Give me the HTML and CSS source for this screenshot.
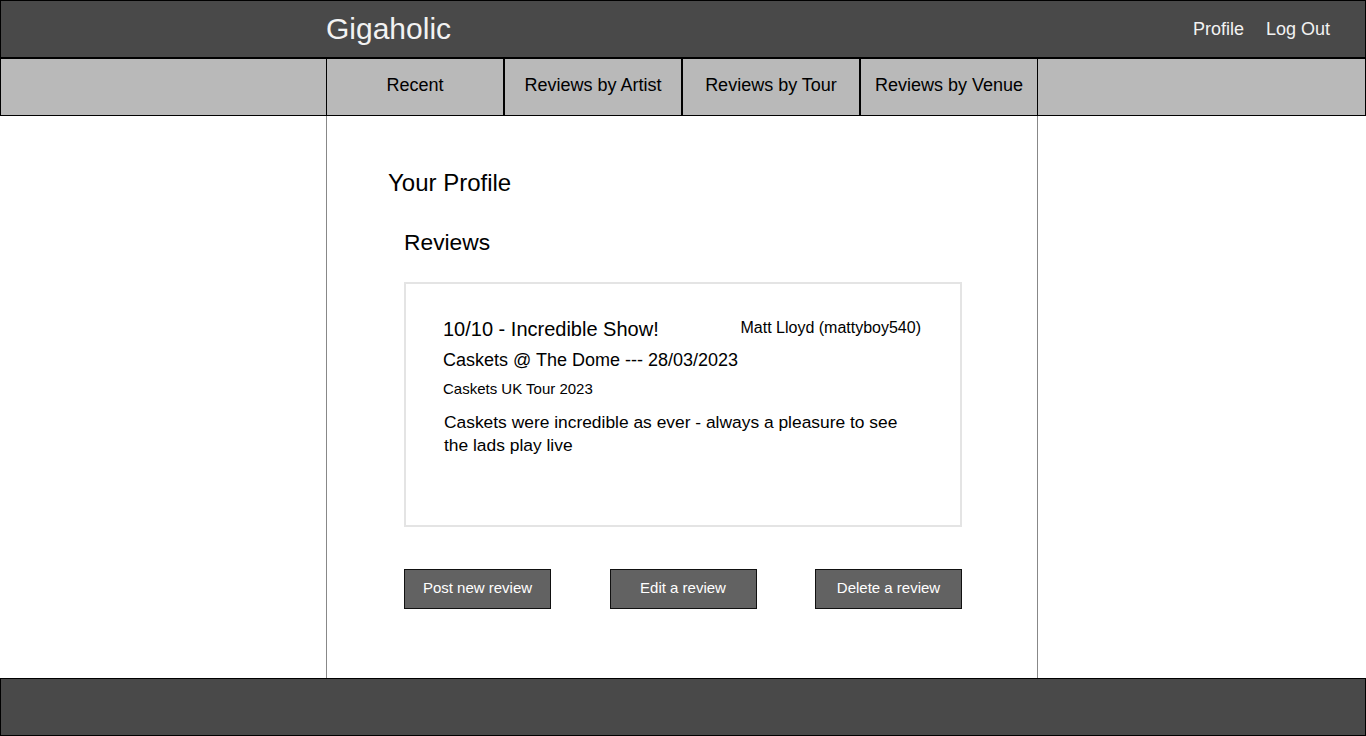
FILE: index.html
```html
<!DOCTYPE html>
<html lang="en">
<head>
<meta charset="utf-8">
<title>Gigaholic - Your Profile</title>
<link rel="stylesheet" href="styles.css">
</head>
<body>
<header class="topbar">
  <div class="brand">Gigaholic</div>
  <nav class="account">
    <a href="#" class="account-link">Profile</a>
    <a href="#" class="account-link">Log Out</a>
  </nav>
</header>
<nav class="tabs">
  <div class="tabs-row">
    <a href="#" class="tab">Recent</a>
    <a href="#" class="tab">Reviews by Artist</a>
    <a href="#" class="tab">Reviews by Tour</a>
    <a href="#" class="tab">Reviews by Venue</a>
  </div>
</nav>
<div class="page">
  <main class="column">
    <h1 class="page-title">Your Profile</h1>
    <section class="reviews">
      <h2 class="section-title">Reviews</h2>
      <article class="card">
        <div class="card-head">
          <span class="card-title">10/10 - Incredible Show!</span>
          <span class="card-author">Matt Lloyd (mattyboy540)</span>
        </div>
        <div class="card-gig">Caskets @ The Dome --- 28/03/2023</div>
        <div class="card-tour">Caskets UK Tour 2023</div>
        <p class="card-body">Caskets were incredible as ever - always a pleasure to see the lads play live</p>
      </article>
      <div class="actions">
        <button class="btn">Post new review</button>
        <button class="btn">Edit a review</button>
        <button class="btn">Delete a review</button>
      </div>
    </section>
  </main>
</div>
<footer class="footer"></footer>
</body>
</html>
```

FILE: styles.css
```css
* { box-sizing: border-box; }

html, body {
  margin: 0;
  padding: 0;
}

body {
  font-family: "Liberation Sans", Arial, sans-serif;
  color: #000;
  background: #fff;
  width: 1366px;
  height: 736px;
  overflow: hidden;
}

a { text-decoration: none; color: inherit; }

.topbar {
  height: 58px;
  background: #494949;
  border: 1px solid #000;
  display: grid;
  grid-template-columns: 325px 1fr auto;
  align-items: center;
  color: #f2f2f2;
}

.brand {
  grid-column: 2;
  font-size: 30px;
  line-height: 34px;
}

.account {
  grid-column: 3;
  display: flex;
  gap: 22px;
  padding-right: 35px;
  padding-bottom: 1px;
}

.account-link {
  font-size: 18px;
  line-height: 22px;
  color: #f2f2f2;
}

.tabs {
  height: 58px;
  background: #b9b9b9;
  border: 1px solid #000;
  display: grid;
  grid-template-columns: 325px 712px 1fr;
}

.tabs-row {
  grid-column: 2;
  display: grid;
  grid-template-columns: repeat(4, 1fr);
}

.tab {
  border-left: 1px solid #000;
  border-right: 1px solid #000;
  display: flex;
  align-items: center;
  justify-content: center;
  font-size: 18px;
  padding-bottom: 4px;
  color: #000;
}

.page {
  height: 562px;
  display: grid;
  grid-template-columns: 326px 712px 1fr;
}

.column {
  grid-column: 2;
  border-left: 1px solid #888;
  border-right: 1px solid #888;
  padding: 53px 0 0 61px;
}

.page-title {
  margin: 0;
  font-size: 24px;
  line-height: 28px;
  font-weight: normal;
}

.reviews {
  padding-left: 16px;
  padding-top: 32px;
  width: 574px;
}

.section-title {
  margin: 0;
  font-size: 22.8px;
  line-height: 26px;
  font-weight: normal;
}

.card {
  margin-top: 27px;
  width: 558px;
  height: 245px;
  border: 2px solid #e4e4e4;
  padding: 33px 39px 0 37px;
}

.card-head {
  display: flex;
  justify-content: space-between;
  align-items: center;
}

.card-title {
  font-size: 20px;
  line-height: 24px;
}

.card-author {
  font-size: 16px;
  line-height: 20px;
  padding-bottom: 2px;
}

.card-gig {
  margin-top: 8px;
  font-size: 18px;
  line-height: 22px;
}

.card-tour {
  margin-top: 9px;
  font-size: 15px;
  line-height: 18px;
}

.card-body {
  margin: 13px 0 0 1px;
  font-size: 17.4px;
  line-height: 23px;
}

.actions {
  margin-top: 42px;
  width: 558px;
  display: flex;
  justify-content: space-between;
}

.btn {
  width: 147px;
  height: 40px;
  background: #626262;
  border: 1px solid #111;
  color: #fff;
  font-family: "Liberation Sans", Arial, sans-serif;
  font-size: 15px;
  padding: 0 0 3px 0;
  cursor: pointer;
}

.footer {
  height: 58px;
  background: #494949;
  border: 1px solid #000;
}
```
